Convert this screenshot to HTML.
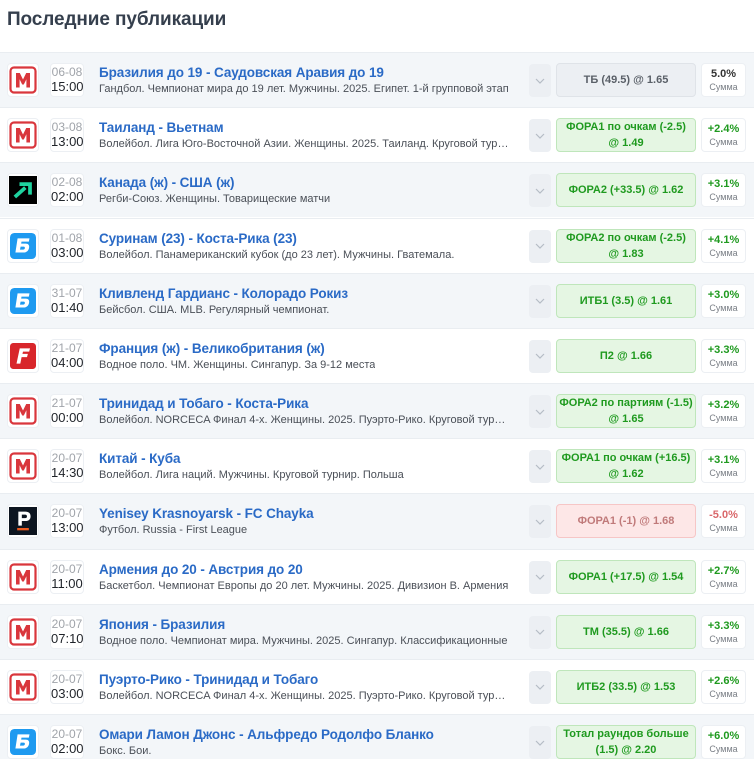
<!DOCTYPE html><html><head><meta charset="utf-8"><style>
*{box-sizing:border-box;margin:0;padding:0}
html,body{width:754px;height:759px;overflow:hidden}
body{background:#fff;font-family:"Liberation Sans",sans-serif;position:relative}
h1{position:absolute;left:7px;top:9px;font-size:19px;font-weight:600;color:#353f4d;letter-spacing:-0.1px}
.row{position:absolute;left:0;width:754px;height:55.17px;border-top:1px solid #e9edf1}
.row.a{background:#f3f6f9}
.logo{position:absolute;left:7px;top:10px;width:32px;height:34px;background:#fff;border:1px solid #eceff3;border-radius:4px;display:flex;align-items:center;justify-content:center}
.date{position:absolute;left:50px;top:10px;width:34px;height:34px;background:#fff;border:1px solid #eceff3;border-radius:4px;text-align:center}
.date .d{font-size:12px;color:#a0a4aa;line-height:14px;margin-top:1px}
.date .t{font-size:13px;color:#1f2329;line-height:16px}
.ti{position:absolute;left:99px;top:12px;font-size:13.5px;font-weight:600;color:#2a6ac6;white-space:nowrap;letter-spacing:-0.1px}
.su{position:absolute;left:99px;top:30px;font-size:11px;color:#4a4f57;white-space:nowrap;max-width:412px;overflow:hidden;text-overflow:ellipsis}
.chev{position:absolute;left:529px;top:11px;width:22px;height:33px;background:#eceff3;border-radius:4px;display:flex;align-items:center;justify-content:center}
.bet{position:absolute;left:556px;top:10px;width:140px;height:34px;border-radius:4px;font-size:11px;font-weight:600;display:flex;align-items:center;justify-content:center;text-align:center;line-height:16px;border:1px solid}
.g{background:#e5f6e3;border-color:#bfe6bb;color:#1f9a1f}
.n{background:#eceff3;border-color:#dfe3e8;color:#5a6068}
.r{background:#fde7e7;border-color:#f6c6c6;color:#c07a7a}
.sum{position:absolute;left:701px;top:10px;width:45px;height:34px;background:#fff;border:1px solid #eceff3;border-radius:4px;text-align:center}
.sum .p{font-size:11px;font-weight:600;line-height:13px;margin-top:4px}
.sum .s{font-size:9px;color:#7a7f86;line-height:12px}
</style></head><body>
<h1>Последние публикации</h1>
<svg width="0" height="0" style="position:absolute"><defs>
<symbol id="M" viewBox="0 0 28 28"><rect x="1.5" y="1.5" width="25" height="25" rx="3.5" fill="#fff" stroke="#d9363c" stroke-width="2.2"/><path d="M7 21.5V7h3.8L14 13.5 17.2 7H21v14.5h-3.6v-8.2l-2.6 5.2h-1.6l-2.6-5.2v8.2z" fill="#d9363c"/></symbol>
<symbol id="B" viewBox="0 0 24 24"><rect x="0" y="0" width="24" height="24" rx="4" fill="#1e9af0"/><path d="M7 5h11l-.6 3H10.6l-.3 1.8h4.2c2.4 0 3.6 1.4 3.1 3.9-.5 2.6-2.3 4.3-5 4.3H5z" fill="#fff"/><path d="M9.8 12.6l-.6 2.8h2.9c.9 0 1.4-.5 1.6-1.3.2-.9-.2-1.5-1.1-1.5z" fill="#1e9af0"/></symbol>
<symbol id="F" viewBox="0 0 24 24"><rect width="24" height="24" rx="3" fill="#d8262b"/><path d="M9 5h9.5l-.8 3H12l-.5 2h5l-.8 3h-5L9.5 19H6z" fill="#fff"/></symbol>
<symbol id="A" viewBox="0 0 24 24"><rect width="24" height="24" fill="#000"/><path d="M5 18l9-8M9 7h9v9" stroke="#1fd3a0" stroke-width="3.2" fill="none"/></symbol>
<symbol id="P" viewBox="0 0 24 24"><rect width="24" height="24" fill="#0d1520"/><path d="M8 4h6c3 0 4.5 1.5 4.5 4s-1.5 4-4.5 4h-3v4H8zM11 6.5v3h2.8c1.1 0 1.6-.5 1.6-1.5s-.5-1.5-1.6-1.5z" fill="#fff"/><rect x="7" y="18" width="10" height="2" fill="#ec5a1f"/></symbol>
<symbol id="c" viewBox="0 0 10 6"><path d="M1 1l4 4 4-4" stroke="#b5bcc5" stroke-width="1.2" fill="none"/></symbol>
</defs></svg>

<div class="row a" style="top:52px"><div class="logo"><svg width="28" height="28"><use href="#M"/></svg></div><div class="date"><div class="d">06-08</div><div class="t">15:00</div></div><div class="ti">Бразилия до 19 - Саудовская Аравия до 19</div><div class="su">Гандбол. Чемпионат мира до 19 лет. Мужчины. 2025. Египет. 1-й групповой этап</div><div class="chev"><svg width="10" height="6"><use href="#c"/></svg></div><div class="bet n">ТБ (49.5) @ 1.65</div><div class="sum"><div class="p" style="color:#333">5.0%</div><div class="s">Сумма</div></div></div>

<div class="row" style="top:107.17px"><div class="logo"><svg width="28" height="28"><use href="#M"/></svg></div><div class="date"><div class="d">03-08</div><div class="t">13:00</div></div><div class="ti">Таиланд - Вьетнам</div><div class="su">Волейбол. Лига Юго-Восточной Азии. Женщины. 2025. Таиланд. Круговой турнир</div><div class="chev"><svg width="10" height="6"><use href="#c"/></svg></div><div class="bet g">ФОРА1 по очкам (-2.5)<br>@ 1.49</div><div class="sum"><div class="p" style="color:#1f9a1f">+2.4%</div><div class="s">Сумма</div></div></div>

<div class="row a" style="top:162.34px"><div class="logo"><svg width="28" height="28"><use href="#A"/></svg></div><div class="date"><div class="d">02-08</div><div class="t">02:00</div></div><div class="ti">Канада (ж) - США (ж)</div><div class="su">Регби-Союз. Женщины. Товарищеские матчи</div><div class="chev"><svg width="10" height="6"><use href="#c"/></svg></div><div class="bet g">ФОРА2 (+33.5) @ 1.62</div><div class="sum"><div class="p" style="color:#1f9a1f">+3.1%</div><div class="s">Сумма</div></div></div>

<div class="row" style="top:217.51px"><div class="logo"><svg width="26" height="26"><use href="#B"/></svg></div><div class="date"><div class="d">01-08</div><div class="t">03:00</div></div><div class="ti">Суринам (23) - Коста-Рика (23)</div><div class="su">Волейбол. Панамериканский кубок (до 23 лет). Мужчины. Гватемала.</div><div class="chev"><svg width="10" height="6"><use href="#c"/></svg></div><div class="bet g">ФОРА2 по очкам (-2.5)<br>@ 1.83</div><div class="sum"><div class="p" style="color:#1f9a1f">+4.1%</div><div class="s">Сумма</div></div></div>

<div class="row a" style="top:272.68px"><div class="logo"><svg width="26" height="26"><use href="#B"/></svg></div><div class="date"><div class="d">31-07</div><div class="t">01:40</div></div><div class="ti">Кливленд Гардианс - Колорадо Рокиз</div><div class="su">Бейсбол. США. MLB. Регулярный чемпионат.</div><div class="chev"><svg width="10" height="6"><use href="#c"/></svg></div><div class="bet g">ИТБ1 (3.5) @ 1.61</div><div class="sum"><div class="p" style="color:#1f9a1f">+3.0%</div><div class="s">Сумма</div></div></div>

<div class="row" style="top:327.85px"><div class="logo"><svg width="26" height="26"><use href="#F"/></svg></div><div class="date"><div class="d">21-07</div><div class="t">04:00</div></div><div class="ti">Франция (ж) - Великобритания (ж)</div><div class="su">Водное поло. ЧМ. Женщины. Сингапур. За 9-12 места</div><div class="chev"><svg width="10" height="6"><use href="#c"/></svg></div><div class="bet g">П2 @ 1.66</div><div class="sum"><div class="p" style="color:#1f9a1f">+3.3%</div><div class="s">Сумма</div></div></div>

<div class="row a" style="top:383.02px"><div class="logo"><svg width="28" height="28"><use href="#M"/></svg></div><div class="date"><div class="d">21-07</div><div class="t">00:00</div></div><div class="ti">Тринидад и Тобаго - Коста-Рика</div><div class="su">Волейбол. NORCECA Финал 4-х. Женщины. 2025. Пуэрто-Рико. Круговой турнир</div><div class="chev"><svg width="10" height="6"><use href="#c"/></svg></div><div class="bet g">ФОРА2 по партиям (-1.5)<br>@ 1.65</div><div class="sum"><div class="p" style="color:#1f9a1f">+3.2%</div><div class="s">Сумма</div></div></div>

<div class="row" style="top:438.19px"><div class="logo"><svg width="28" height="28"><use href="#M"/></svg></div><div class="date"><div class="d">20-07</div><div class="t">14:30</div></div><div class="ti">Китай - Куба</div><div class="su">Волейбол. Лига наций. Мужчины. Круговой турнир. Польша</div><div class="chev"><svg width="10" height="6"><use href="#c"/></svg></div><div class="bet g">ФОРА1 по очкам (+16.5)<br>@ 1.62</div><div class="sum"><div class="p" style="color:#1f9a1f">+3.1%</div><div class="s">Сумма</div></div></div>

<div class="row a" style="top:493.36px"><div class="logo"><svg width="28" height="28"><use href="#P"/></svg></div><div class="date"><div class="d">20-07</div><div class="t">13:00</div></div><div class="ti">Yenisey Krasnoyarsk - FC Chayka</div><div class="su">Футбол. Russia - First League</div><div class="chev"><svg width="10" height="6"><use href="#c"/></svg></div><div class="bet r">ФОРА1 (-1) @ 1.68</div><div class="sum"><div class="p" style="color:#d9676a">-5.0%</div><div class="s">Сумма</div></div></div>

<div class="row" style="top:548.53px"><div class="logo"><svg width="28" height="28"><use href="#M"/></svg></div><div class="date"><div class="d">20-07</div><div class="t">11:00</div></div><div class="ti">Армения до 20 - Австрия до 20</div><div class="su">Баскетбол. Чемпионат Европы до 20 лет. Мужчины. 2025. Дивизион B. Армения</div><div class="chev"><svg width="10" height="6"><use href="#c"/></svg></div><div class="bet g">ФОРА1 (+17.5) @ 1.54</div><div class="sum"><div class="p" style="color:#1f9a1f">+2.7%</div><div class="s">Сумма</div></div></div>

<div class="row a" style="top:603.7px"><div class="logo"><svg width="28" height="28"><use href="#M"/></svg></div><div class="date"><div class="d">20-07</div><div class="t">07:10</div></div><div class="ti">Япония - Бразилия</div><div class="su">Водное поло. Чемпионат мира. Мужчины. 2025. Сингапур. Классификационные</div><div class="chev"><svg width="10" height="6"><use href="#c"/></svg></div><div class="bet g">ТМ (35.5) @ 1.66</div><div class="sum"><div class="p" style="color:#1f9a1f">+3.3%</div><div class="s">Сумма</div></div></div>

<div class="row" style="top:658.87px"><div class="logo"><svg width="28" height="28"><use href="#M"/></svg></div><div class="date"><div class="d">20-07</div><div class="t">03:00</div></div><div class="ti">Пуэрто-Рико - Тринидад и Тобаго</div><div class="su">Волейбол. NORCECA Финал 4-х. Женщины. 2025. Пуэрто-Рико. Круговой турнир</div><div class="chev"><svg width="10" height="6"><use href="#c"/></svg></div><div class="bet g">ИТБ2 (33.5) @ 1.53</div><div class="sum"><div class="p" style="color:#1f9a1f">+2.6%</div><div class="s">Сумма</div></div></div>

<div class="row a" style="top:714.04px"><div class="logo"><svg width="26" height="26"><use href="#B"/></svg></div><div class="date"><div class="d">20-07</div><div class="t">02:00</div></div><div class="ti">Омари Ламон Джонс - Альфредо Родолфо Бланко</div><div class="su">Бокс. Бои.</div><div class="chev"><svg width="10" height="6"><use href="#c"/></svg></div><div class="bet g">Тотал раундов больше<br>(1.5) @ 2.20</div><div class="sum"><div class="p" style="color:#1f9a1f">+6.0%</div><div class="s">Сумма</div></div></div>
</body></html>
